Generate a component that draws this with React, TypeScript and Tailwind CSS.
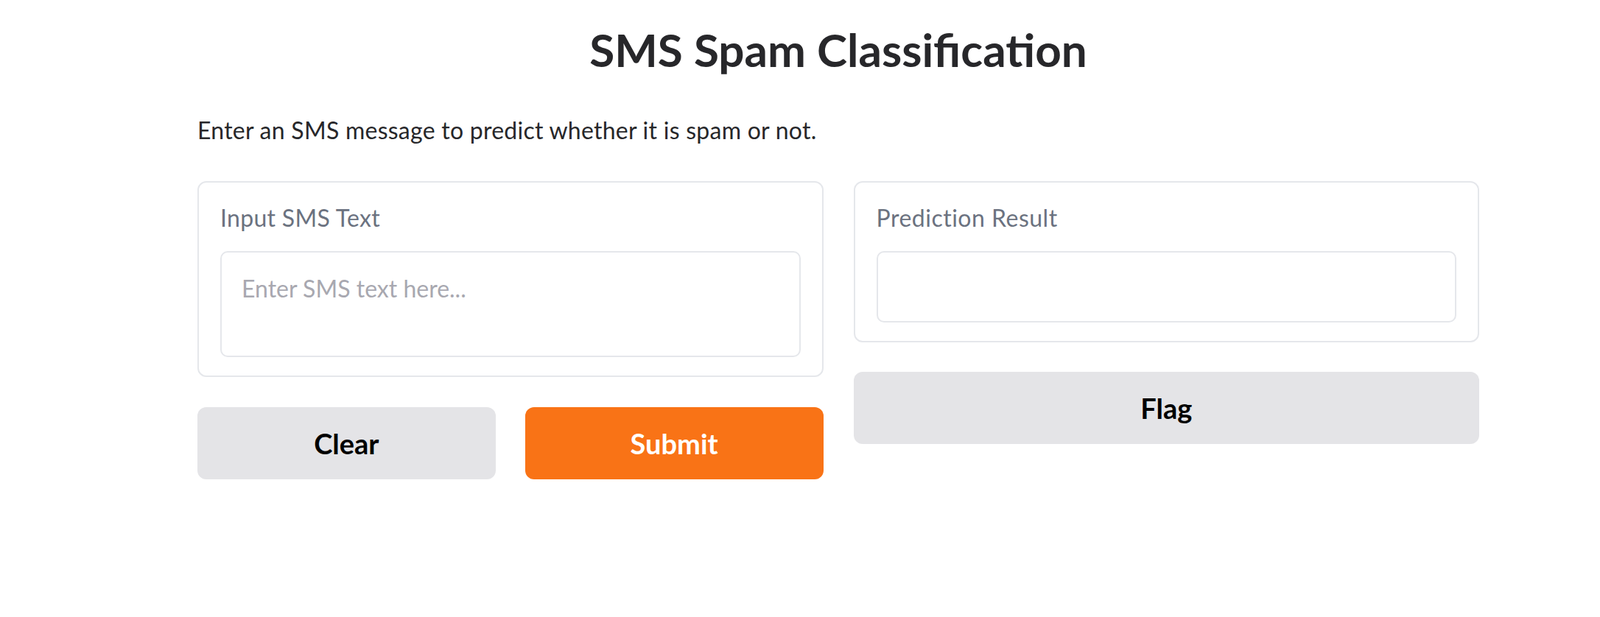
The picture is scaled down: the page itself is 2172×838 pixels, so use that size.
import React from "react";

export default function App() {
  const font = { fontFamily: "Lato, 'Noto Sans', sans-serif" };
  return (
    <div className="min-h-[838px] bg-white" style={font}>
      <div className="ml-[268px] w-[1740px] pt-[31px]">
        <h1 className="text-center text-[62px] leading-[72px] font-bold text-[#27272a]">
          SMS Spam Classification
        </h1>
        <p className="mt-[54px] text-[32px] leading-[40px] tracking-[0.25px] text-[#27272a]">
          Enter an SMS message to predict whether it is spam or not.
        </p>
        <div className="mt-[49px] grid grid-cols-2 gap-[41px] items-start">
          <div className="flex flex-col gap-[41px]">
            <div className="border-2 border-[#e5e7eb] rounded-[12px] px-[29px] pt-[28px] pb-[25px]">
              <div className="text-[32px] leading-[40px] tracking-[0.3px] text-[#6b7280]">Input SMS Text</div>
              <textarea
                className="mt-[25px] block w-full h-[144px] border-2 border-[#e5e7eb] rounded-[10px] pl-[27px] pr-[20px] pt-[29px] text-[32px] leading-[40px] text-[#27272a] placeholder:text-[#a8a8b0] resize-none outline-none"
                style={font}
                placeholder="Enter SMS text here..."
              />
            </div>
            <div className="grid grid-cols-2 gap-[40px]">
              <button className="h-[98px] rounded-[12px] bg-[#e4e4e7] text-black text-[38px] font-bold" style={font}>
                Clear
              </button>
              <button className="h-[98px] rounded-[12px] bg-[#f97316] text-white text-[38px] font-bold" style={font}>
                Submit
              </button>
            </div>
          </div>
          <div className="flex flex-col gap-[40px]">
            <div className="border-2 border-[#e5e7eb] rounded-[12px] px-[29px] pt-[28px] pb-[25px]">
              <div className="text-[32px] leading-[40px] tracking-[0.5px] text-[#6b7280]">Prediction Result</div>
              <div className="mt-[25px] h-[97px] border-2 border-[#e5e7eb] rounded-[10px]" />
            </div>
            <button className="h-[98px] rounded-[12px] bg-[#e4e4e7] text-black text-[38px] font-bold" style={font}>
              Flag
            </button>
          </div>
        </div>
      </div>
    </div>
  );
}
